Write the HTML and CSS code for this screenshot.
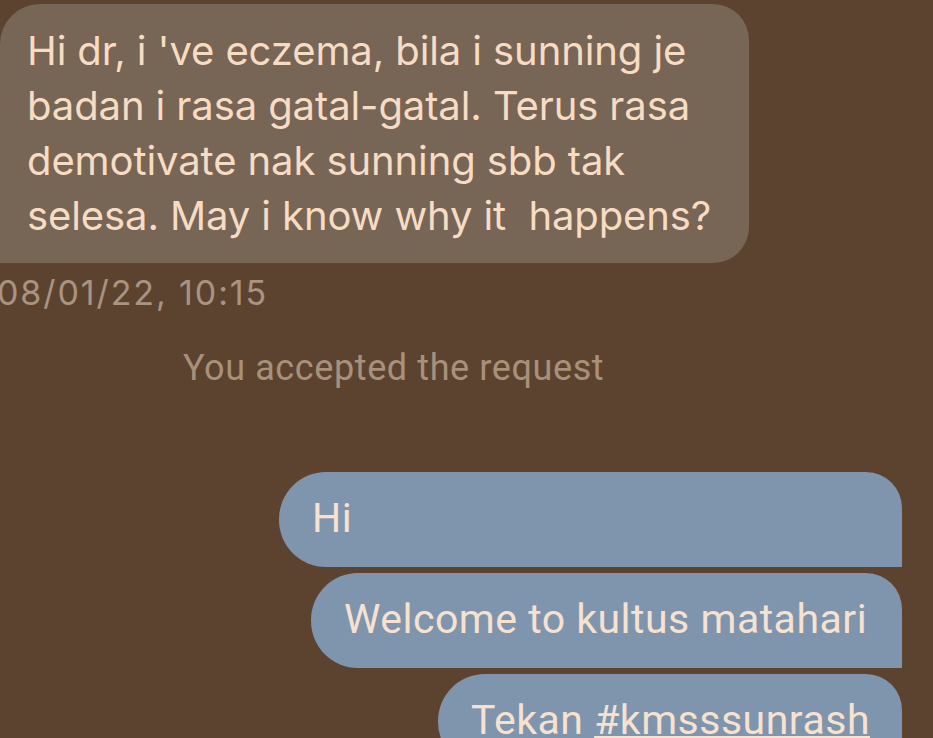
FILE: index.html
```html
<!DOCTYPE html>
<html>
<head>
<meta charset="utf-8">
<link rel="stylesheet" href="styles.css">
</head>
<body>
<div class="chat">
  <div class="incoming">
    <div class="bubble-in">Hi dr, i 've eczema, bila i sunning je<br>badan i rasa gatal-gatal. Terus rasa<br>demotivate nak sunning sbb tak<br>selesa. May i know why it&nbsp; happens?</div>
    <div class="stamp">08/01/22, 10:15</div>
  </div>
  <div class="notice">You accepted the request</div>
  <div class="outgoing">
    <div class="bubble-out b1"><span class="txt">Hi</span></div>
    <div class="bubble-out b2"><span class="txt">Welcome to kultus matahari</span></div>
    <div class="bubble-out b3"><span class="txt">Tekan <span class="tag">#kmsssunrash</span></span></div>
  </div>
</div>
</body>
</html>
```
FILE: styles.css
```css
html, body {
  margin: 0;
  padding: 0;
  background: #5c4330;
  overflow: hidden;
  height: 738px;
}
.chat {
  display: flex;
  flex-direction: column;
  padding-top: 4px;
}
.incoming {
  display: flex;
  flex-direction: column;
  align-items: flex-start;
}
.bubble-in {
  width: 749px;
  box-sizing: border-box;
  height: 259px;
  background: #776555;
  color: #f7dcc4;
  border-radius: 40px 36px 36px 0;
  padding: 19px 0 0 27px;
  font-family: Inter, "Liberation Sans", sans-serif;
  font-size: 40px;
  line-height: 55px;
  letter-spacing: -0.1px;
}
.stamp {
  margin-left: -3px;
  margin-top: 10px;
  color: #a99381;
  font-family: Inter, "Liberation Sans", sans-serif;
  font-size: 34px;
  line-height: 40px;
  letter-spacing: 1.9px;
}
.notice {
  margin-top: 35px;
  margin-left: 183px;
  color: #a8917b;
  font-family: Roboto, "Liberation Sans", sans-serif;
  font-size: 36px;
  line-height: 40px;
  letter-spacing: 0.6px;
}
.outgoing {
  margin-top: 84px;
  display: flex;
  flex-direction: column;
  align-items: flex-end;
  gap: 6px;
  padding-right: 31px;
}
.bubble-out {
  box-sizing: border-box;
  height: 95px;
  background: #7f95ad;
  color: #f7e2cf;
  border-radius: 47px 36px 0 47px;
  display: flex;
  align-items: center;
  padding: 0 33px 4px;
  font-family: Roboto, "Liberation Sans", sans-serif;
  font-size: 41px;
  line-height: 48px;
  white-space: nowrap;
}
.b1 { width: 623px; }
.b2 { width: 591px; }
.b3 { width: 464px; padding-right: 0; }
.txt {
  display: inline-block;
  letter-spacing: 0.5px;
}
.tag {
  text-decoration: underline;
  text-decoration-thickness: 2px;
  text-underline-offset: 2px;
}
```
